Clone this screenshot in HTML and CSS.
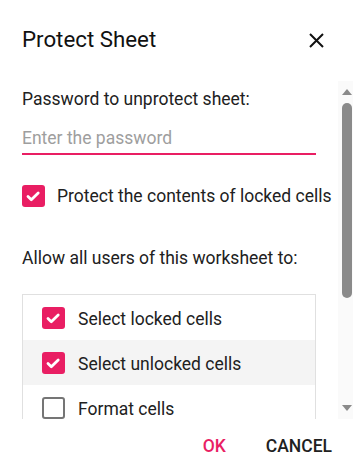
FILE: index.html
```html
<!DOCTYPE html>
<html>
<head>
<meta charset="utf-8">
<link rel="stylesheet" href="styles.css">
</head>
<body>
<div class="dialog">
  <div class="header">
    <div class="title">Protect Sheet</div>
    <button class="close" aria-label="Close">
      <svg width="15" height="15" viewBox="0 0 15 15"><path d="M1 1L14 14M14 1L1 14" stroke="#111" stroke-width="2" fill="none"/></svg>
    </button>
  </div>
  <div class="body">
    <div class="content">
      <div class="label">Password to unprotect sheet:</div>
      <div class="input"><span class="placeholder">Enter the password</span></div>
      <div class="check-row">
        <span class="cb checked"><svg viewBox="0 0 22 22" width="22" height="22"><path d="M6 11.5l3.3 3.2L16.2 8" stroke="#fff" stroke-width="2.8" fill="none" stroke-linecap="round" stroke-linejoin="round"/></svg></span>
        <span class="cb-text">Protect the contents of locked cells</span>
      </div>
      <div class="label allow">Allow all users of this worksheet to:</div>
      <div class="list">
        <div class="item">
          <span class="cb checked"><svg viewBox="0 0 22 22" width="22" height="22"><path d="M6 11.5l3.3 3.2L16.2 8" stroke="#fff" stroke-width="2.8" fill="none" stroke-linecap="round" stroke-linejoin="round"/></svg></span>
          <span class="item-text">Select locked cells</span>
        </div>
        <div class="item hover">
          <span class="cb checked"><svg viewBox="0 0 22 22" width="22" height="22"><path d="M6 11.5l3.3 3.2L16.2 8" stroke="#fff" stroke-width="2.8" fill="none" stroke-linecap="round" stroke-linejoin="round"/></svg></span>
          <span class="item-text">Select unlocked cells</span>
        </div>
        <div class="item">
          <span class="cb"></span>
          <span class="item-text">Format cells</span>
        </div>
      </div>
    </div>
    <div class="scrollbar">
      <span class="arrow up"></span>
      <div class="track"><div class="thumb"></div></div>
      <span class="arrow down"></span>
    </div>
  </div>
  <div class="footer">
    <button class="btn ok">OK</button>
    <button class="btn cancel">CANCEL</button>
  </div>
</div>
</body>
</html>
```
FILE: styles.css
```css
html, body {
  margin: 0;
  padding: 0;
  background: #fff;
}
body {
  font-family: Roboto, "Noto Sans", sans-serif;
  color: #212121;
}
.dialog {
  width: 353px;
  height: 472px;
  display: flex;
  flex-direction: column;
  overflow: hidden;
}
.header {
  height: 81px;
  flex: none;
  box-sizing: border-box;
  display: flex;
  justify-content: space-between;
  align-items: flex-start;
  padding: 25px 29px 0 22px;
}
.title {
  font-size: 22.3px;
  line-height: 28px;
  color: #111;
}
.close {
  border: 0;
  background: none;
  padding: 0;
  margin-top: 8px;
  width: 15px;
  height: 15px;
  display: block;
}
.close svg { display: block; }
.body {
  height: 338px;
  flex: none;
  display: flex;
}
.content {
  flex: 1;
  overflow: hidden;
  padding: 0 22px;
}
.label {
  font-size: 17.5px;
  line-height: 20px;
  margin-top: 8px;
  white-space: nowrap;
}
.input {
  margin-top: 19px;
  border-bottom: 2px solid #e91e63;
  height: 27px;
  box-sizing: border-box;
}
.placeholder {
  font-size: 17.5px;
  color: #9e9e9e;
  line-height: 20px;
  display: block;
}
.check-row {
  display: flex;
  align-items: center;
  margin-top: 30px;
  gap: 12px;
  white-space: nowrap;
}
.cb {
  width: 23px;
  height: 22px;
  box-sizing: border-box;
  border: 2px solid #757575;
  border-radius: 3px;
  flex: none;
  display: block;
  background: #fff;
}
.cb.checked {
  border: 0;
  background: #e91e63;
}
.cb svg { display: block; }
.cb-text {
  font-size: 17.5px;
  line-height: 20px;
}
.allow {
  margin-top: 41px;
}
.list {
  margin-top: 26px;
  border: 1px solid #e0e0e0;
}
.item {
  height: 45px;
  display: flex;
  align-items: center;
  padding-left: 19px;
  gap: 13px;
}
.item.hover {
  background: #f4f4f4;
}
.item-text {
  font-size: 17.5px;
  line-height: 20px;
  padding-top: 3px;
  white-space: nowrap;
}
.scrollbar {
  width: 15px;
  flex: none;
  box-sizing: border-box;
  padding-left: 4px;
  background: #fafafa;
  display: flex;
  flex-direction: column;
  align-items: flex-start;
}
.arrow {
  width: 0;
  height: 0;
  border-left: 5px solid transparent;
  border-right: 5px solid transparent;
  display: block;
}
.arrow.up {
  margin-top: 8px;
  border-bottom: 6px solid #8a8a8a;
}
.arrow.down {
  margin-bottom: 8px;
  border-top: 6px solid #8a8a8a;
}
.track {
  flex: 1;
  width: 100%;
  padding-top: 8px;
  box-sizing: border-box;
}
.thumb {
  width: 10px;
  height: 195px;
  border-radius: 5px;
  background: #8a8a8a;
}
.footer {
  flex: 1;
  display: flex;
  justify-content: flex-end;
  align-items: center;
  padding-right: 21px;
}
.btn {
  border: 0;
  background: none;
  font-family: Roboto, "Noto Sans", sans-serif;
  font-size: 17.5px;
  font-weight: 500;
  line-height: 20px;
  padding: 0;
  text-transform: uppercase;
}
.btn.ok {
  color: #e91e63;
  margin-right: 40px;
}
.btn.cancel {
  color: #212121;
}
```
